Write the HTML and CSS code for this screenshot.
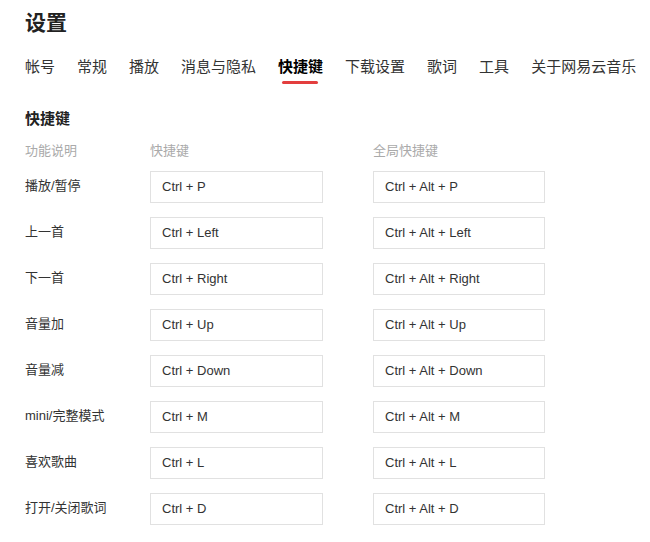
FILE: index.html
```html
<!DOCTYPE html>
<html>

<head>
  <meta charset="utf-8">
  <title>设置</title>
  <link rel="stylesheet" href="styles.css">
</head>

<body>
  <div class="settings">
    <h1 class="settings-title">设置</h1>

    <nav class="settings-tabs">
      <span class="tab">帐号</span>
      <span class="tab">常规</span>
      <span class="tab">播放</span>
      <span class="tab">消息与隐私</span>
      <span class="tab active">快捷键</span>
      <span class="tab">下载设置</span>
      <span class="tab">歌词</span>
      <span class="tab">工具</span>
      <span class="tab">关于网易云音乐</span>
    </nav>

    <section class="hotkeys">
      <h2 class="section-title">快捷键</h2>
      <div class="hotkey-grid">
        <div class="col-head">功能说明</div>
        <div class="col-head">快捷键</div>
        <div class="col-head">全局快捷键</div>

        <div class="hk-label">播放/暂停</div>
        <div class="hk-cell"><div class="hk-input">Ctrl + P</div></div>
        <div class="hk-cell"><div class="hk-input">Ctrl + Alt + P</div></div>

        <div class="hk-label">上一首</div>
        <div class="hk-cell"><div class="hk-input">Ctrl + Left</div></div>
        <div class="hk-cell"><div class="hk-input">Ctrl + Alt + Left</div></div>

        <div class="hk-label">下一首</div>
        <div class="hk-cell"><div class="hk-input">Ctrl + Right</div></div>
        <div class="hk-cell"><div class="hk-input">Ctrl + Alt + Right</div></div>

        <div class="hk-label">音量加</div>
        <div class="hk-cell"><div class="hk-input">Ctrl + Up</div></div>
        <div class="hk-cell"><div class="hk-input">Ctrl + Alt + Up</div></div>

        <div class="hk-label">音量减</div>
        <div class="hk-cell"><div class="hk-input">Ctrl + Down</div></div>
        <div class="hk-cell"><div class="hk-input">Ctrl + Alt + Down</div></div>

        <div class="hk-label">mini/完整模式</div>
        <div class="hk-cell"><div class="hk-input">Ctrl + M</div></div>
        <div class="hk-cell"><div class="hk-input">Ctrl + Alt + M</div></div>

        <div class="hk-label">喜欢歌曲</div>
        <div class="hk-cell"><div class="hk-input">Ctrl + L</div></div>
        <div class="hk-cell"><div class="hk-input">Ctrl + Alt + L</div></div>

        <div class="hk-label">打开/关闭歌词</div>
        <div class="hk-cell"><div class="hk-input">Ctrl + D</div></div>
        <div class="hk-cell"><div class="hk-input">Ctrl + Alt + D</div></div>
      </div>
    </section>
  </div>
</body>

</html>
```

FILE: styles.css
```css
body, html {
  margin: 0;
  padding: 0;
}

body {
  background: #fff;
  color: #333;
  font-family: "Liberation Sans", "Noto Sans CJK SC", sans-serif;
}

.settings {
  padding: 8px 25px 0 25px;
}

.settings-title {
  margin: 0;
  font-size: 21px;
  line-height: 29px;
  font-weight: bold;
  color: #222;
}

/* Tab bar */
.settings-tabs {
  display: flex;
  margin-top: 19px;
  white-space: nowrap;
}

.tab {
  position: relative;
  margin-right: 22px;
  font-size: 15px;
  line-height: 22px;
  color: #333;
}

.tab.active {
  font-weight: bold;
  color: #000;
}

.tab.active::after {
  content: "";
  position: absolute;
  left: 4px;
  right: 5px;
  top: 25px;
  height: 3px;
  border-radius: 2px;
  background: #e33e3e;
}

/* Hotkeys section */
.section-title {
  margin: 30px 0 0 0;
  font-size: 15px;
  line-height: 22px;
  font-weight: bold;
  color: #222;
}

.hotkey-grid {
  display: grid;
  grid-template-columns: 125px 223px 172px;
  row-gap: 14px;
  margin-top: 11px;
}

.col-head {
  font-size: 13px;
  line-height: 20px;
  color: #aaa;
  margin-bottom: -4.5px;
}

.hk-label {
  display: flex;
  align-items: center;
  font-size: 13px;
  line-height: 18px;
  color: #333;
  margin-top: -2px;
}

.hk-input {
  box-sizing: border-box;
  width: 173px;
  height: 32px;
  padding: 0 11px;
  border: 1px solid #e1e1e1;
  font-size: 13px;
  line-height: 30px;
  color: #333;
}

.hk-cell:nth-child(3n) .hk-input {
  width: 172px;
}
```
